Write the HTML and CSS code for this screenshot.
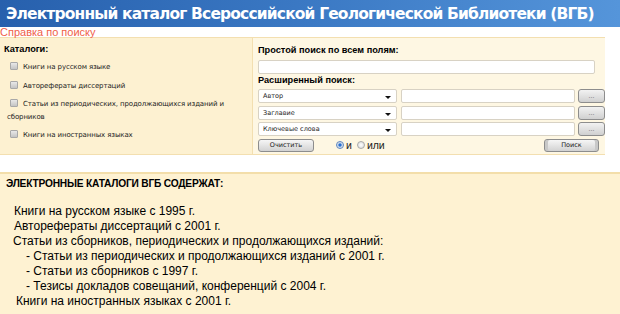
FILE: index.html
```html
<!DOCTYPE html>
<html>
<head>
<meta charset="utf-8">
<link rel="stylesheet" href="styles.css">
</head>
<body>
<div class="header">Электронный каталог Всероссийской Геологической Библиотеки (ВГБ)</div>
<div class="help">Справка по поиску</div>
<div class="search">
  <div class="cats">
    <div class="cats-title">Каталоги:</div>
    <div class="cat"><span class="cb"></span>Книги на русском языке</div>
    <div class="cat"><span class="cb"></span>Авторефераты диссертаций</div>
    <div class="cat"><span class="cb"></span>Статьи из периодических, продолжающихся изданий и сборников</div>
    <div class="cat"><span class="cb"></span>Книги на иностранных языках</div>
  </div>
  <div class="form">
    <div class="ftitle">Простой поиск по всем полям:</div>
    <div class="input wide"></div>
    <div class="ftitle adv">Расширенный поиск:</div>
    <div class="row"><div class="select">Автор<span class="arr"></span></div><div class="input txt"></div><div class="dots">...</div></div>
    <div class="row"><div class="select">Заглавие<span class="arr"></span></div><div class="input txt"></div><div class="dots">...</div></div>
    <div class="row"><div class="select">Ключевые слова<span class="arr"></span></div><div class="input txt"></div><div class="dots">...</div></div>
    <div class="actions">
      <div class="btn clear">Очистить</div>
      <div class="radios"><span class="radio on"></span>и<span class="radio second"></span>или</div>
      <div class="btn find">Поиск</div>
    </div>
  </div>
</div>
<div class="info">
  <div class="info-title">ЭЛЕКТРОННЫЕ КАТАЛОГИ ВГБ СОДЕРЖАТ:</div>
  <div class="list">
    <div class="l1">Книги на русском языке с 1995 г.</div>
    <div class="l1">Авторефераты диссертаций с 2001 г.</div>
    <div class="l0">Статьи из сборников, периодических и продолжающихся изданий:</div>
    <div class="l2">- Статьи из периодических и продолжающихся изданий с 2001 г.</div>
    <div class="l2">- Статьи из сборников с 1997 г.</div>
    <div class="l2">- Тезисы докладов совещаний, конференций с 2004 г.</div>
    <div class="l3">Книги на иностранных языках с 2001 г.</div>
  </div>
</div>
</body>
</html>
```
FILE: styles.css
```css
* { box-sizing: border-box; }
body { margin: 0; background: #fff; font-family: "Liberation Sans", Arial, sans-serif; color: #000; width: 620px; height: 314px; overflow: hidden; }
.header { height: 27px; background: linear-gradient(to right, #2760ad, #3b79c4 50%, #5595da); color: #fff; font-family: "DejaVu Sans", Verdana, sans-serif; font-weight: bold; font-size: 15.5px; line-height: 28px; padding-left: 6px; white-space: nowrap; letter-spacing: -0.85px; }
.help { color: #f0604a; font-size: 11px; line-height: 11px; height: 10px; }
.search { display: flex; height: 118px; background: #fdf1d1; border-top: 1px solid #f3dfb0; border-bottom: 1px solid #f3dfb0; width: 605px; }
.cats { width: 254px; padding: 5px 0 0 4px; border-right: 1px solid #f3dfb0; }
.cats-title { font-weight: bold; font-size: 9.2px; line-height: 13px; margin-bottom: 5px; }
.cat { font-family: "DejaVu Sans", Verdana, sans-serif; font-size: 7px; line-height: 12.5px; margin-bottom: 6px; padding-left: 3px; color: #222; letter-spacing: -0.12px; }
.cb { display: inline-block; width: 8px; height: 8px; border: 1px solid #a8a8a8; background: linear-gradient(#e8e8e8, #c4c4c4); vertical-align: -1px; margin: 0 5px 0 3px; border-radius: 1px; }
.form { flex: 1; background: #fef7e3; padding: 6px 0 0 5px; }
.ftitle { font-weight: bold; font-size: 9.2px; line-height: 13px; }
.input { background: #fff; border: 1px solid #d8d2c4; height: 14px; border-radius: 2px; }
.wide { width: 337px; margin-top: 3px; }
.adv { margin-top: 0; margin-bottom: 2px; }
.row { display: flex; align-items: center; height: 14px; margin-bottom: 2.5px; }
.select { width: 139px; height: 14px; background: #fff; border: 1px solid #d8d2c4; border-radius: 2px; font-family: "DejaVu Sans", Verdana, sans-serif; font-size: 6.5px; line-height: 12px; padding-left: 4px; position: relative; color: #222; }
.arr { position: absolute; right: 5px; top: 6px; width: 0; height: 0; border-left: 3px solid transparent; border-right: 3px solid transparent; border-top: 3px solid #111; }
.txt { width: 174px; margin-left: 4px; }
.dots { width: 27px; height: 14px; margin-left: 3px; border: 1px solid #8d8d8d; border-radius: 3px; background: linear-gradient(#f2f2f2, #d0d0d0); font-size: 7px; color: #666; text-align: center; line-height: 11px; }
.actions { display: flex; align-items: center; margin-top: 1px; }
.btn { height: 13px; border: 1px solid #8d8d8d; border-radius: 3px; background: linear-gradient(#f6f6f6, #d2d2d2); font-family: "DejaVu Sans", Verdana, sans-serif; font-size: 6.5px; text-align: center; line-height: 11px; color: #222; }
.clear { width: 56px; }
.radios { font-size: 10.5px; margin-left: 22px; display: flex; align-items: center; color: #222; }
.radio { display: inline-block; width: 8px; height: 8px; border-radius: 50%; border: 1px solid #aaa; background: radial-gradient(#fff, #d6d6d6); margin-right: 2px; }
.radio.on { background: radial-gradient(#2a6fd0 30%, #bcd3ef 45%, #e6e6e6 70%); border-color: #5d86c0; }
.radio.second { margin-left: 5px; }
.find { width: 55px; margin-left: auto; margin-right: 6px; box-shadow: inset 3px 0 0 #c8c8c8, inset -3px 0 0 #c8c8c8; }
.info { margin-top: 17px; height: 142px; background: #fef2d2; border-top: 2px solid #f3deaa; padding: 3px 0 0 6px; }
.info-title { font-weight: bold; font-size: 10.2px; line-height: 13px; letter-spacing: -0.2px; }
.list { margin-top: 14px; font-size: 12px; line-height: 15px; }
.l1 { padding-left: 8px; }
.l0 { padding-left: 7px; }
.l2 { padding-left: 20px; }
.l3 { padding-left: 10px; }
```
